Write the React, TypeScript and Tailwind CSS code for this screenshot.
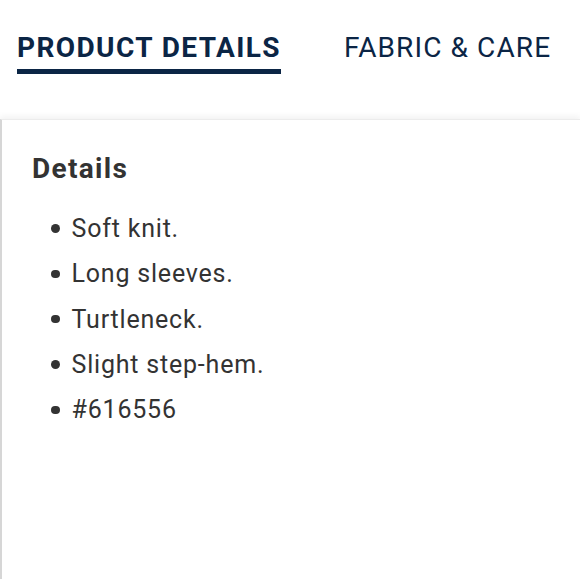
import React from "react";

export default function App() {
  const items = ["Soft knit.", "Long sleeves.", "Turtleneck.", "Slight step-hem.", "#616556"];
  return (
    <div className="w-[580px] h-[579px] overflow-hidden bg-white font-['Roboto',sans-serif]">
      <div className="flex h-[119px] items-start pt-[31px] pl-[17px]">
        <div className="text-[28px] font-bold leading-[33px] tracking-[1.4px] text-[#0b2545] border-b-[5px] border-[#0b2545] pb-[5px]">
          PRODUCT DETAILS
        </div>
        <div className="ml-[63px] text-[28px] font-normal leading-[33px] tracking-[1.1px] text-[#0b2545]">
          FABRIC &amp; CARE
        </div>
      </div>
      <div className="h-[460px] border-t border-l-2 border-t-[#ececec] border-l-[#d6d6d6] shadow-[0_-3px_6px_rgba(0,0,0,0.05)] pl-[30px] pt-[32px]">
        <h2 className="text-[28px] font-bold leading-[34px] tracking-[1.3px] text-[#333333]">Details</h2>
        <ul className="flex flex-col pl-[19px] mt-[20px] text-[25px] leading-[45.3px] tracking-[0.8px] text-[#333333]">
          {items.map((t) => (
            <li key={t} className="flex items-center">
              <span className="w-[8.5px] h-[8.5px] rounded-full bg-[#333333] mr-[12px]" />
              <span>{t}</span>
            </li>
          ))}
        </ul>
      </div>
    </div>
  );
}
